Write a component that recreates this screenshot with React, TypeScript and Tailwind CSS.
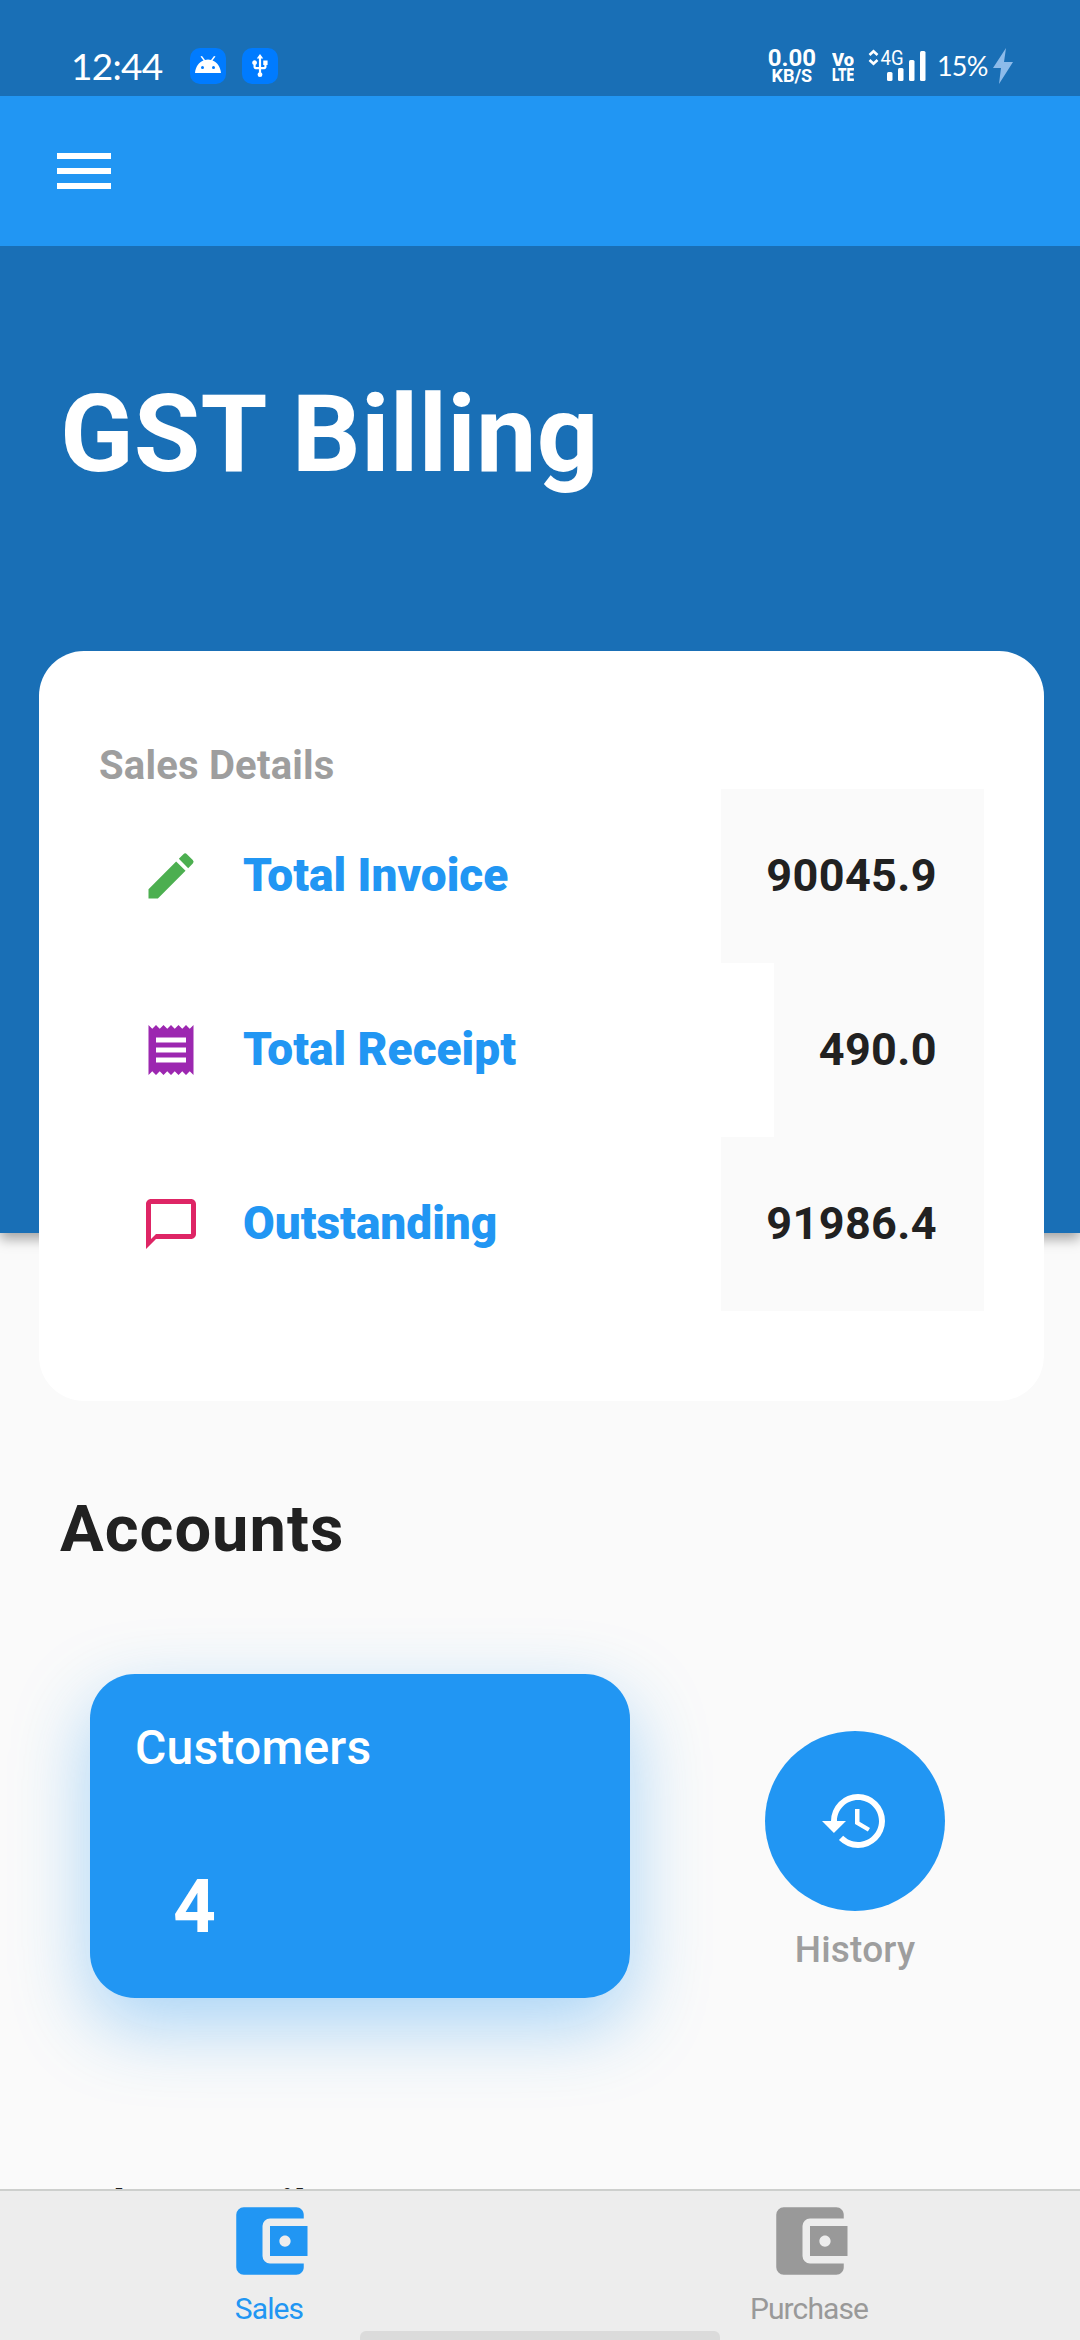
import type { IconType } from 'react-icons';
import {
  MdAccountBalanceWallet,
  MdChatBubbleOutline,
  MdCreate,
  MdHistory,
  MdMenu,
  MdReceipt,
  MdUsb,
} from 'react-icons/md';

interface SalesRow {
  label: string;
  value: string;
  icon: IconType;
  color: string;
}

const salesRows: SalesRow[] = [
  { label: 'Total Invoice', value: '90045.9', icon: MdCreate, color: 'text-[#4caf50]' },
  { label: 'Total Receipt', value: '490.0', icon: MdReceipt, color: 'text-[#9c27b0]' },
  { label: 'Outstanding', value: '91986.4', icon: MdChatBubbleOutline, color: 'text-[#de2565]' },
];

const tabs = [
  { label: 'Sales', color: 'text-[#2196f3]' },
  { label: 'Purchase', color: 'text-[#999999]' },
];

function SignalIcon() {
  return (
    <svg className="ml-3.5 h-[34px] w-[58px]" viewBox="0 0 58 34" fill="none">
      <path d="M1.5 7 5.5 3.2 9.5 7M1.5 12 5.5 15.8 9.5 12" stroke="white" strokeWidth="2.6" />
      <text x="12.5" y="17" fill="white" fontSize="19.5" textLength="23" lengthAdjust="spacingAndGlyphs">
        4G
      </text>
      <rect x="19" y="24" width="5.5" height="9" rx="1.5" fill="white" />
      <rect x="30" y="20" width="5.5" height="13" rx="1.5" fill="white" />
      <rect x="41" y="12" width="5.5" height="21" rx="1.5" fill="white" />
      <rect x="52" y="3" width="5.5" height="30" rx="1.5" fill="white" />
    </svg>
  );
}

function StatusBar() {
  return (
    <div className="flex h-24 items-start bg-[#196fb6] pl-[71px] pr-[67px] pt-12 text-white">
      <span className="w-[119px] font-['Lato'] text-[37px] leading-[35px] tracking-[-0.7px]">12:44</span>
      <span className="flex size-9 items-center justify-center rounded-[10px] bg-[#007bff]">
        <svg className="mb-1 h-[17px] w-[26px]" viewBox="0 0 26 17">
          <path d="M0 17C.5 11 4 6 8.5 4.5L5.5.5 7 0 10 4Q13 3 16 4L19 0 20.5.5 17.5 4.5C22 6 25.5 11 26 17Z" fill="white" />
          <circle cx="7.5" cy="11.5" r="1.5" fill="#007bff" />
          <circle cx="18.5" cy="11.5" r="1.5" fill="#007bff" />
        </svg>
      </span>
      <span className="ml-4 flex size-9 items-center justify-center rounded-[10px] bg-[#007bff]">
        <MdUsb className="size-[26px]" />
      </span>

      <div className="ml-auto flex items-start">
        <div className="flex flex-col items-center font-bold">
          <span className="text-[24px] leading-5">0.00</span>
          <span className="text-[18px] leading-4">KB/S</span>
        </div>
        <svg className="ml-4 h-[34px] w-[22px]" viewBox="0 0 22 34" fill="white" fontWeight="900">
          <text x="0" y="18" fontSize="19" textLength="22" lengthAdjust="spacingAndGlyphs">Vo</text>
          <text x="0" y="33" fontSize="18" textLength="22" lengthAdjust="spacingAndGlyphs">LTE</text>
        </svg>
        <SignalIcon />
        <span className="ml-[11px] w-[54px] font-['Lato'] text-[27px] leading-9 tracking-[-0.8px]">15%</span>
        <svg className="ml-0.5 h-9 w-5" viewBox="0 0 20 36">
          <path d="M13 0 0 20H8L6 36 20 14H11Z" fill="#8dbbea" />
        </svg>
      </div>
    </div>
  );
}

function SalesCard() {
  return (
    <div className="ml-[39px] mt-[154px] h-[750px] w-[1005px] rounded-[45px] bg-white pl-[60px] pr-[60px] pt-[92px]">
      <h2 className="text-[40px] font-bold leading-[46px] tracking-[0.2px] text-[#9e9e9e]">Sales Details</h2>
      {salesRows.map(({ label, value, icon: Icon, color }) => (
        <div key={label} className="flex h-[174px] items-center pl-[42px]">
          <Icon className={`size-[60px] ${color}`} />
          <span className="ml-[42px] pb-0.5 text-[46px] font-black text-[#2196f3]">{label}</span>
          <span className="ml-auto flex h-full items-center bg-[#fafafa] pl-[45px] pr-[47px] text-[45px] font-bold tracking-[0.4px] text-[#212121]">
            {value}
          </span>
        </div>
      ))}
    </div>
  );
}

export default function App() {
  return (
    <div className="flex h-[2340px] w-[1080px] flex-col overflow-hidden bg-[#fafafa] font-['Roboto',sans-serif]">
      <StatusBar />
      <div className="flex h-[150px] shrink-0 items-center bg-[#2196f3] px-12">
        <MdMenu className="size-[72px] text-white" />
      </div>

      <main className="h-[1943px] shrink-0 overflow-hidden">
        <header className="h-[987px] bg-[#196fb6] pt-[125px] shadow-[0_6px_12px_rgba(0,0,0,0.35)]">
          <h1 className="pl-[60px] text-[108px] font-bold leading-[126px] tracking-[0.2px] text-white">GST Billing</h1>
          <SalesCard />
        </header>

        <section className="mt-[259px] pl-[60px]">
          <h2 className="text-[65px] font-bold leading-[74px] tracking-[1px] text-[#212121]">Accounts</h2>
          <div className="mt-[108px] flex items-center pl-[30px]">
            <div className="h-[324px] w-[540px] rounded-[45px] bg-[#2196f3] px-[45px] pt-[46px] text-white shadow-[0_27px_76px_rgba(33,150,243,0.38)]">
              <p className="text-[48px] font-medium leading-[56px] tracking-[0.2px]">Customers</p>
              <p className="mt-[86px] pl-[38px] text-[75px] font-bold leading-[88px]">4</p>
            </div>
            <div className="ml-[135px] mt-[30px] flex flex-col items-center">
              <div className="flex size-[180px] items-center justify-center rounded-full bg-[#2196f3]">
                <MdHistory className="size-[72px] text-white" />
              </div>
              <p className="mt-[18px] text-[37px] font-medium leading-[42px] tracking-[0.2px] text-[#9e9e9e]">History</p>
            </div>
          </div>
          <h2 className="mt-[181px] text-[45px] font-bold leading-[54px] tracking-[0.6px] text-[#212121]">Sales Details</h2>
        </section>
      </main>

      <nav className="relative flex h-[151px] shrink-0 border-t-2 border-[#cdcfcd] bg-[#ededed]">
        {tabs.map(({ label, color }) => (
          <div key={label} className={`flex flex-1 flex-col items-center pt-[5px] ${color}`}>
            <MdAccountBalanceWallet className="size-[90px]" />
            <span className="mt-[5px] pr-0.5 text-[30px] leading-9 tracking-[-0.9px]">{label}</span>
          </div>
        ))}
        <div className="absolute bottom-0 left-[360px] h-[9px] w-[360px] rounded-t-md bg-[#dbdbdb]" />
      </nav>
    </div>
  );
}
